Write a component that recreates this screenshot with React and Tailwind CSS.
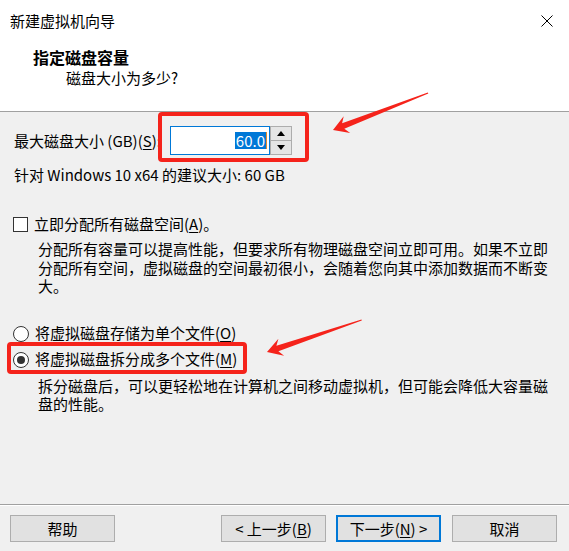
import React from "react";

const FONT = { fontFamily: '"Noto Sans CJK SC", "Noto Sans", sans-serif' };

const Key = ({ children }) => <span className="underline underline-offset-2">{children}</span>;

const SpinBox = () => (
  <div className="flex h-[29px]">
    <div className="w-[100px] h-full bg-white border border-[#0078d7] flex items-center justify-end pr-[2px]">
      <span className="bg-[#0078d7] text-white leading-[17px] px-px">60.0</span>
      <span className="w-px h-[17px] bg-[#e08a2c]" />
    </div>
    <div className="w-[22px] h-full flex flex-col border border-[#adadad] bg-[#e5e5e5]">
      <button className="flex-1 flex items-center justify-center border-b border-[#adadad]">
        <svg width="8" height="5" viewBox="0 0 8 5">
          <path d="M0 5 L4 0 L8 5 Z" fill="#000" />
        </svg>
      </button>
      <button className="flex-1 flex items-center justify-center">
        <svg width="8" height="5" viewBox="0 0 8 5">
          <path d="M0 0 L8 0 L4 5 Z" fill="#000" />
        </svg>
      </button>
    </div>
  </div>
);

const Radio = ({ checked, children }) => (
  <div className="flex items-center h-[20px] pl-[13px]">
    <span className="w-[16px] h-[16px] rounded-full border border-[#333] bg-white flex items-center justify-center">
      {checked && <span className="w-[8px] h-[8px] rounded-full bg-[#333]" />}
    </span>
    <span className="ml-[6px]">{children}</span>
  </div>
);

const Btn = ({ children, primary }) => (
  <button
    className={
      primary
        ? "w-[105px] h-[27px] bg-[#e1e1e1] border-2 border-[#0078d7] text-[15px] leading-none"
        : "w-[105px] h-[27px] bg-[#e1e1e1] border border-[#adadad] text-[15px] leading-none"
    }
  >
    {children}
  </button>
);

export default function App() {
  return (
    <div className="relative w-[569px] h-[551px] bg-[#f0f0f0] text-black text-[15px] flex flex-col overflow-hidden" style={FONT}>
      {/* header */}
      <div className="h-[112px] bg-white border-b border-[#a0a0a0] shrink-0">
        <div className="h-[42px] flex items-center justify-between pl-[10px] pr-[16px]">
          <span className="leading-[20px]">新建虚拟机向导</span>
          <svg width="12" height="12" viewBox="0 0 12 12">
            <path d="M0.5 0.5 L11.5 11.5 M11.5 0.5 L0.5 11.5" stroke="#000" strokeWidth="1" />
          </svg>
        </div>
        <div className="mt-[5px] pl-[33px] font-bold text-[16px] leading-[20px]">指定磁盘容量</div>
        <div className="mt-px pl-[66px] leading-[20px]">磁盘大小为多少?</div>
      </div>

      {/* body */}
      <div className="flex-1 flex flex-col">
        <div className="mt-[14px] flex items-center pl-[14px]">
          <span className="w-[156px] leading-[20px] whitespace-nowrap">
            最大磁盘大小 (GB)(<Key>S</Key>):
          </span>
          <SpinBox />
        </div>
        <div className="mt-[10px] pl-[14px] leading-[20px]">针对 Windows 10 x64 的建议大小: 60 GB</div>

        <div className="mt-[29px] flex items-center h-[20px] pl-[13px]">
          <span className="w-[15px] h-[15px] border border-[#333] bg-white" />
          <span className="ml-[6px]">
            立即分配所有磁盘空间(<Key>A</Key>)。
          </span>
        </div>
        <p className="mt-[6px] pl-[38px] leading-[18.5px]">
          分配所有容量可以提高性能，但要求所有物理磁盘空间立即可用。如果不立即
          <br />
          分配所有空间，虚拟磁盘的空间最初很小，会随着您向其中添加数据而不断变
          <br />
          大。
        </p>

        <div className="mt-[28px]">
          <Radio>
            将虚拟磁盘存储为单个文件(<Key>O</Key>)
          </Radio>
        </div>
        <div className="mt-[6px]">
          <Radio checked>
            将虚拟磁盘拆分成多个文件(<Key>M</Key>)
          </Radio>
        </div>
        <p className="mt-[7px] pl-[38px] leading-[18px]">
          拆分磁盘后，可以更轻松地在计算机之间移动虚拟机，但可能会降低大容量磁
          <br />
          盘的性能。
        </p>
      </div>

      {/* footer */}
      <div className="shrink-0 border-t border-[#a0a0a0]">
        <div className="border-t border-white pt-[9px] pb-[9px] pl-[10px] pr-[12px] flex">
          <Btn>帮助</Btn>
          <div className="ml-auto flex">
            <Btn>
              &lt; 上一步(<Key>B</Key>)
            </Btn>
            <div className="ml-[10px]">
              <Btn primary>
                下一步(<Key>N</Key>) &gt;
              </Btn>
            </div>
            <div className="ml-[11px]">
              <Btn>取消</Btn>
            </div>
          </div>
        </div>
      </div>

      {/* annotations */}
      <div className="absolute left-[158px] top-[112px] w-[151px] h-[50px] border-4 border-[#f5231b] rounded-[4px] pointer-events-none" />
      <div className="absolute left-[7px] top-[342px] w-[240px] h-[32px] border-4 border-[#f5231b] rounded-[4px] pointer-events-none" />
      <svg className="absolute inset-0 pointer-events-none" width="569" height="551" viewBox="0 0 569 551">
        <polygon
          points="427.8,92.6 342.1,123.2 343.7,116.2 333,130 350.2,132.9 344.3,128.8 428.3,93.5"
          fill="#f5231b"
        />
        <polygon
          points="361.5,319.5 276.4,345.7 278.4,338.7 267,352 284.1,355.7 278.4,351.3 361.8,320.5"
          fill="#f5231b"
        />
      </svg>
    </div>
  );
}
